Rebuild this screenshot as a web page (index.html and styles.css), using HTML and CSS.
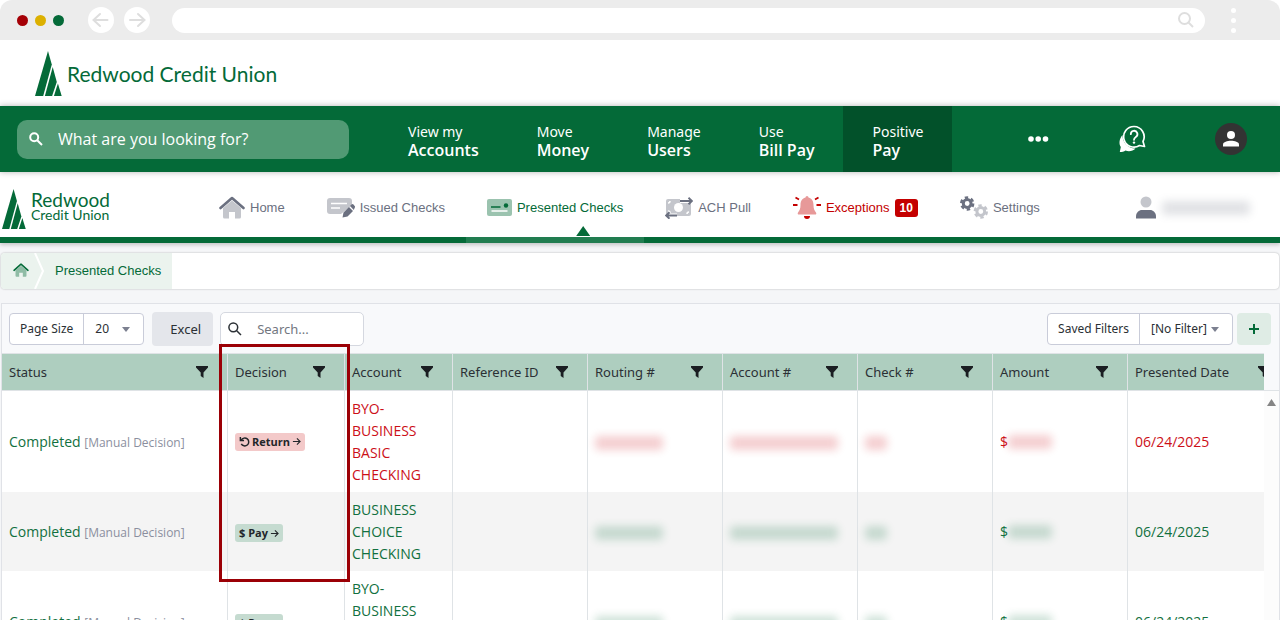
FILE: index.html
```html
<!DOCTYPE html>
<html lang="en">
<head>
    <meta charset="UTF-8">
    <meta name="viewport" content="width=device-width, initial-scale=1.0">
    <title>Redwood Credit Union - Presented Checks</title>
    <link rel="stylesheet" href="styles.css">
</head>
<body>
    <!-- Shared icons -->
    <svg class="symbols" aria-hidden="true">
        <symbol id="trees" viewBox="0 0 27 45">
            <path d="M13 0L16.800 13.500L8.200 45H0z"/>
            <path d="M17.700 16L21.800 31L17.100 45H9.900z"/>
            <path d="M22.900 32.500L26.700 45H18.900z"/>
        </symbol>
        <symbol id="funnel" viewBox="0 0 12 12">
            <path d="M0 0h12v1.500L7.500 6.500V12L4.700 10V6.500L0 1.500z"/>
        </symbol>
        <symbol id="arrow" viewBox="0 0 10 10">
            <path d="M1 5h8M5.500 1.500L9 5L5.500 8.500" fill="none" stroke="currentColor" stroke-width="1.200"/>
        </symbol>
        <symbol id="house" viewBox="0 0 26 23">
            <path d="M4 12L13 4.500L22 12V21a1.500 1.500 0 0 1-1.500 1.500H16V16h-6v6.500H5.500A1.500 1.500 0 0 1 4 21z" class="soft"/>
            <path d="M1.500 12L13 2L24.500 12" fill="none" stroke="currentColor" stroke-width="2.600" stroke-linecap="round" stroke-linejoin="round"/>
        </symbol>
    </svg>

    <div class="browser-bar">
        <span class="dot red"></span>
        <span class="dot yellow"></span>
        <span class="dot green"></span>
        <button class="round back" aria-label="Back">
            <svg width="26" height="26" viewBox="0 0 26 26"><path d="M19.500 13H6M12 7L5.500 13L12 19"/></svg>
        </button>
        <button class="round" aria-label="Forward">
            <svg width="26" height="26" viewBox="0 0 26 26"><path d="M6 13H19.500M14 7L20.500 13L14 19"/></svg>
        </button>
        <div class="address">
            <input type="text" aria-label="Address">
            <svg width="16" height="16" viewBox="0 0 16 16"><circle cx="6.500" cy="6.500" r="5.500"/><path d="M10.500 10.500L15 15"/></svg>
        </div>
        <button class="kebab" aria-label="Browser menu"><i></i><i></i><i></i></button>
    </div>

    <header class="brand">
        <svg width="27" height="45"><use href="#trees"/></svg>
        <span>Redwood Credit Union</span>
    </header>

    <nav class="main-nav">
        <div class="site-search">
            <svg width="14" height="14" viewBox="0 0 14 14"><circle cx="5.200" cy="5.200" r="4"/><path d="M8.200 8.200L13 13"/></svg>
            <input type="text" placeholder="What are you looking for?" aria-label="What are you looking for?">
        </div>
        <a href="#" class="main-link">View my<b>Accounts</b></a>
        <a href="#" class="main-link">Move<b>Money</b></a>
        <a href="#" class="main-link">Manage<b>Users</b></a>
        <a href="#" class="main-link">Use<b>Bill Pay</b></a>
        <a href="#" class="main-link active">Positive<b>Pay</b></a>
        <div class="nav-tools">
            <button aria-label="More">
                <svg width="22" height="8" viewBox="0 0 22 8"><circle cx="4" cy="4" r="2.800"/><circle cx="11.200" cy="4" r="2.800"/><circle cx="18.500" cy="4" r="2.800"/></svg>
            </button>
            <button aria-label="Help">
                <svg width="28" height="28" viewBox="0 0 28 28">
                    <path d="M4.500 10C1 14 .800 19 2.800 22L1.800 27C4 27 6 26.500 7.500 25.500C11 27 15 26 17.500 23.500C10 23.500 4.500 18 4.500 10z"/>
                    <path d="M16 1.500a10.300 10.300 0 1 0 5.500 19L26.500 21.500L25 16.500A10.300 10.300 0 0 0 16 1.500z" fill="none" stroke="#fff" stroke-width="1.700" stroke-linejoin="round"/>
                    <path d="M12.800 9.200a3.300 3.300 0 1 1 5 2.700c-1.200.800-1.800 1.300-1.800 2.900" fill="none" stroke="#fff" stroke-width="1.800" stroke-linecap="round"/>
                    <circle cx="16" cy="17.600" r="1.200"/>
                </svg>
            </button>
            <button class="avatar" aria-label="Profile">
                <svg width="16" height="16" viewBox="0 0 16 16"><circle cx="8" cy="4" r="4"/><path d="M0 15.500v-2C0 11 4.500 9.800 8 9.800s8 1.200 8 3.700v2z"/></svg>
            </button>
        </div>
    </nav>

    <nav class="sub-nav">
        <a href="#" class="sub-brand">
            <svg width="24" height="40"><use href="#trees"/></svg>
            <span><b>Redwood</b><i>Credit Union</i></span>
        </a>
        <a href="#" class="tab">
            <svg width="26" height="23"><use href="#house"/></svg>Home
        </a>
        <a href="#" class="tab">
            <svg width="28" height="22" viewBox="0 0 28 22">
                <path class="soft" d="M3 1h19a3 3 0 0 1 3 3v4L14 17H3a3 3 0 0 1-3-3V4a3 3 0 0 1 3-3z"/>
                <path d="M4 6.500h16M4 11h9" stroke="#fff" stroke-width="1.600"/>
                <path d="M15.500 20.500l1-5L22 10l4 4L20.500 19.500zM23 9l1.500-1.500q1-.800 2 0l1.200 1.500q.700 1 0 1.800L26.800 13z" fill="currentColor"/>
            </svg>Issued Checks
        </a>
        <a href="#" class="tab current">
            <svg width="25" height="17" viewBox="0 0 25 17">
                <rect class="soft" width="25" height="17" rx="2"/>
                <path d="M4 8h9.500" stroke="currentColor" stroke-width="1.500"/><circle cx="19" cy="6.500" r="2.200" fill="currentColor"/>
                <path d="M4.500 12h16" stroke="#fff" stroke-width="1.500"/>
            </svg>Presented Checks
        </a>
        <a href="#" class="tab">
            <svg width="28" height="22" viewBox="0 0 28 22">
                <rect class="soft" x="1" y="2" width="25" height="17" rx="2"/>
                <circle cx="13.500" cy="10.500" r="4.500" fill="#fff"/>
                <path d="M3 6a2 2 0 0 0 2-2M3 14a2 2 0 0 1 2 2M24 15a2 2 0 0 0-2 2" stroke="#fff" fill="none" stroke-width="1.500"/>
                <path d="M15 4h9M12 18.500H4" stroke="#fff" stroke-width="4" fill="none"/>
                <path d="M15 4h12M23.500 .800L27 4L23.500 7.200M12 18.500H1M4.500 15.300L1 18.500L4.500 21.700" stroke="currentColor" stroke-width="1.900" fill="none"/>
            </svg>ACH Pull
        </a>
        <a href="#" class="tab alert">
            <svg width="28" height="23" viewBox="0 0 28 23">
                <path class="soft" d="M14 0q1.500 0 1.500 1.500C19.500 2.500 20.500 6 20.500 9c0 4 1 5.500 2.500 7.500q1 2-1 2H6q-2 0-1-2C6.500 14.500 7.500 13 7.500 9c0-3 1-6.500 5-7.500Q12.500 0 14 0z"/>
                <path d="M11 20h6a3 3 0 0 1-6 0z" fill="currentColor"/>
                <path d="M2.500 1.500l3.500 2M0 9h4.500M25.500 1.500L22 3.500M23.500 9H28" stroke="currentColor" stroke-width="1.800"/>
            </svg>Exceptions<span class="badge">10</span>
        </a>
        <a href="#" class="tab">
            <svg width="28" height="23" viewBox="0 0 28 23">
                <g fill="none" stroke="currentColor"><circle cx="7.200" cy="7.500" r="3.900" stroke-width="3"/><circle cx="7.200" cy="7.500" r="6" stroke-width="2.400" stroke-dasharray="3.400 2.880"/></g>
                <g fill="none" class="soft-line"><circle cx="20.800" cy="15.500" r="3.900" stroke-width="3"/><circle cx="20.800" cy="15.500" r="6" stroke-width="2.400" stroke-dasharray="3.400 2.880"/></g>
            </svg>Settings
        </a>
        <a href="#" class="user" aria-label="Account owner">
            <svg width="20" height="23" viewBox="0 0 20 23"><circle class="soft" cx="10" cy="6" r="5.500"/><path d="M0 22.500v-2c0-4 3-6.500 6-6.500h8c3 0 6 2.500 6 6.500v2z" fill="currentColor"/></svg>
            <span class="redacted owner"></span>
        </a>
    </nav>

    <main>
        <div class="crumbs">
            <a href="#" class="crumb-home" aria-label="Home"><svg width="16" height="14" viewBox="0 0 26 23"><use href="#house"/></svg></a>
            <svg class="chevron" width="10" height="36" viewBox="0 0 10 36"><path d="M1 0L9 18L1 36"/></svg>
            <a href="#" class="crumb-page">Presented Checks</a>
        </div>

        <section class="panel">
            <div class="toolbar">
                <div class="group">
                    <label for="pageSize">Page Size</label>
                    <span class="pick"><select id="pageSize" class="size"><option>20</option><option>50</option></select></span>
                </div>
                <button class="excel">Excel</button>
                <div class="search">
                    <svg width="14" height="14" viewBox="0 0 14 14"><circle cx="5.300" cy="5.300" r="4.400"/><path d="M8.500 8.500L13 13"/></svg>
                    <input type="text" placeholder="Search..." aria-label="Search">
                </div>
                <div class="group filters">
                    <label for="savedFilter">Saved Filters</label>
                    <span class="pick"><select id="savedFilter" class="saved"><option>[No Filter]</option></select></span>
                </div>
                <button class="add" aria-label="Add filter"><svg width="12" height="12" viewBox="0 0 12 12"><path d="M6 1v10M1 6h10"/></svg></button>
            </div>

            <div class="grid">
                <div class="table-wrap">
                    <table>
                        <colgroup>
                            <col class="c-status"><col class="c-decision"><col class="c-account">
                            <col class="c-std"><col class="c-std"><col class="c-std"><col class="c-std"><col class="c-std"><col>
                        </colgroup>
                        <thead>
                            <tr>
                                <th><div>Status<svg><use href="#funnel"/></svg></div></th>
                                <th><div>Decision<svg><use href="#funnel"/></svg></div></th>
                                <th><div>Account<svg><use href="#funnel"/></svg></div></th>
                                <th><div>Reference ID<svg><use href="#funnel"/></svg></div></th>
                                <th><div>Routing #<svg><use href="#funnel"/></svg></div></th>
                                <th><div>Account #<svg><use href="#funnel"/></svg></div></th>
                                <th><div>Check #<svg><use href="#funnel"/></svg></div></th>
                                <th><div>Amount<svg><use href="#funnel"/></svg></div></th>
                                <th><div class="wide">Presented Date<svg><use href="#funnel"/></svg></div></th>
                            </tr>
                        </thead>
                        <tbody>
                            <tr class="returned">
                                <td><span class="done">Completed</span> <span class="note">[Manual Decision]</span></td>
                                <td><span class="tag"><svg viewBox="0 0 12 12"><path d="M2.500 4.500A4.300 4.300 0 1 1 2.500 8.500M1.500 1v4h4" fill="none" stroke="currentColor" stroke-width="1.600"/></svg>Return<svg class="go"><use href="#arrow"/></svg></span></td>
                                <td>BYO-BUSINESS BASIC CHECKING</td>
                                <td></td>
                                <td><span class="redacted routing"></span></td>
                                <td><span class="redacted number"></span></td>
                                <td><span class="redacted check"></span></td>
                                <td><span class="money">$<span class="redacted amount"></span></span></td>
                                <td>06/24/2025</td>
                            </tr>
                            <tr>
                                <td><span class="done">Completed</span> <span class="note">[Manual Decision]</span></td>
                                <td><span class="tag">$ Pay<svg class="go"><use href="#arrow"/></svg></span></td>
                                <td>BUSINESS CHOICE CHECKING</td>
                                <td></td>
                                <td><span class="redacted routing"></span></td>
                                <td><span class="redacted number"></span></td>
                                <td><span class="redacted check"></span></td>
                                <td><span class="money">$<span class="redacted amount"></span></span></td>
                                <td>06/24/2025</td>
                            </tr>
                            <tr>
                                <td><span class="done">Completed</span> <span class="note">[Manual Decision]</span></td>
                                <td><span class="tag">$ Pay<svg class="go"><use href="#arrow"/></svg></span></td>
                                <td>BYO-BUSINESS BASIC CHECKING</td>
                                <td></td>
                                <td><span class="redacted routing"></span></td>
                                <td><span class="redacted number"></span></td>
                                <td><span class="redacted check"></span></td>
                                <td><span class="money">$<span class="redacted amount"></span></span></td>
                                <td>06/24/2025</td>
                            </tr>
                        </tbody>
                    </table>
                </div>
                <div class="scrollbar"><span></span></div>
                <div class="highlight"></div>
            </div>
        </section>
    </main>
</body>
</html>
```

FILE: styles.css
```css
* {
    margin: 0;
    padding: 0;
    box-sizing: border-box;
}

body {
    font-family: 'Noto Sans', 'Open Sans', sans-serif;
    font-size: 13px;
    color: #2b3035;
    background: #fff;
    height: 100vh;
    overflow: hidden;
    display: flex;
    flex-direction: column;
}

a {
    color: inherit;
    text-decoration: none;
}

button, input, select {
    font: inherit;
    color: inherit;
    border: none;
    background: none;
    outline: none;
}

svg {
    display: block;
    flex: none;
}

.symbols {
    position: absolute;
    width: 0;
    height: 0;
}

/* Browser frame */
.browser-bar {
    flex: none;
    height: 40px;
    background: #ececec;
    border-radius: 12px 12px 0 0;
    display: flex;
    align-items: center;
    padding: 0 44px 0 17px;
}

.dot {
    width: 11px;
    height: 11px;
    border-radius: 50%;
    margin-right: 7px;
}

.red { background: #a50006; }
.yellow { background: #dcb000; }
.green { background: #046a38; }

.round {
    width: 26px;
    height: 26px;
    border-radius: 50%;
    background: #fff;
    margin-right: 10px;
}

.back {
    margin-left: 17px;
}

.round path {
    fill: none;
    stroke: #dedede;
    stroke-width: 2;
    stroke-linecap: round;
}

.address {
    flex: 1;
    height: 25px;
    border-radius: 13px;
    background: #fff;
    margin: 0 26px 0 12px;
    padding: 0 11px 0 16px;
    display: flex;
    align-items: center;
}

.address input {
    flex: 1;
}

.address svg {
    fill: none;
    stroke: #dedede;
    stroke-width: 2;
}

.kebab {
    display: flex;
    flex-direction: column;
    gap: 5px;
}

.kebab i {
    width: 5px;
    height: 5px;
    border-radius: 50%;
    background: #fff;
}

/* Brand */
.brand {
    flex: none;
    height: 66px;
    padding: 0 35px;
    display: flex;
    align-items: center;
    gap: 5px;
    font-family: Lato, sans-serif;
    font-size: 21px;
    color: #046a38;
}

.brand svg, .sub-brand svg {
    fill: #046a38;
}

/* Main navigation */
.main-nav {
    flex: none;
    height: 66px;
    background: #046a38;
    color: #fff;
    display: flex;
    align-items: center;
    padding: 0 33px 0 17px;
    box-shadow: 0 0 6px rgba(0, 0, 0, 0.3);
    position: relative;
    z-index: 2;
}

.site-search {
    flex: 0 1 332px;
    height: 39px;
    margin-right: 30px;
    padding: 0 12px;
    border-radius: 10px;
    background: #519a74;
    display: flex;
    align-items: center;
    gap: 15px;
}

.site-search svg {
    fill: none;
    stroke: #fff;
    stroke-width: 2;
}

.site-search input {
    flex: 1;
    min-width: 0;
    font-family: 'Open Sans', sans-serif;
    font-size: 16px;
}

.site-search input::placeholder {
    color: #fff;
    opacity: 1;
}

.main-link {
    height: 66px;
    padding: 16px 29px 0;
    font-size: 14px;
    line-height: 19px;
    white-space: nowrap;
}

.main-link b {
    display: block;
    font-family: 'Open Sans', sans-serif;
    font-size: 16px;
    font-weight: 600;
}

.main-link.active {
    background: #02512a;
}

.nav-tools {
    margin-left: auto;
    display: flex;
    align-items: center;
    gap: 69px;
}

.nav-tools svg {
    fill: #fff;
}

.avatar {
    width: 32px;
    height: 32px;
    border-radius: 50%;
    background: #333;
    display: grid;
    place-items: center;
}

/* Sub navigation */
.sub-nav {
    flex: none;
    height: 71px;
    border-bottom: 6px solid #046a38;
    display: flex;
    align-items: flex-start;
    padding: 0 30px 0 2px;
    font-family: 'Liberation Sans', Arial, sans-serif;
    color: #6b7080;
    box-shadow: 0 2px 4px rgba(0, 0, 0, 0.2);
    position: relative;
    z-index: 1;
}

.soft {
    fill: currentColor;
    opacity: 0.4;
}

.soft-line {
    stroke: currentColor;
    opacity: 0.4;
}

.sub-brand {
    width: 196px;
    padding-top: 17px;
    display: flex;
    align-items: center;
    gap: 5px;
    font-family: Lato, sans-serif;
    color: #046a38;
}

.sub-brand b, .sub-brand i {
    display: block;
    font-weight: 400;
    font-style: normal;
    white-space: nowrap;
}

.sub-brand b {
    font-size: 19px;
    line-height: 16px;
}

.sub-brand i {
    font-size: 14px;
    line-height: 14px;
    padding-bottom: 4px;
}

.tab {
    height: 71px;
    padding: 0 21px;
    display: flex;
    align-items: center;
    gap: 5px;
    white-space: nowrap;
    position: relative;
}

.current {
    color: #046a38;
    border-bottom: 6px solid #217d50;
    padding-top: 6px;
}

.current::after {
    content: '';
    position: absolute;
    right: 54px;
    bottom: 1px;
    width: 14px;
    height: 10px;
    background: #046a38;
    clip-path: polygon(50% 0, 100% 100%, 0 100%);
}

.alert {
    color: #c40000;
}

.badge {
    background: #c40000;
    color: #fff;
    font-size: 12px;
    font-weight: 700;
    line-height: 18px;
    padding: 0 5px;
    border-radius: 3px;
}

.user {
    height: 71px;
    margin-left: auto;
    display: flex;
    align-items: center;
    gap: 6px;
}

/* Blurred-out values */
.redacted {
    display: inline-block;
    vertical-align: middle;
    height: 14px;
    border-radius: 4px;
    background: currentColor;
    opacity: 0.2;
    filter: blur(4px);
}

.owner { width: 88px; }
.routing { width: 68px; }
.number { width: 108px; }
.check { width: 22px; }
.amount { width: 44px; }

/* Page body */
main {
    flex: 1;
    min-height: 0;
    background: #f5f6f8;
    padding-top: 10px;
    display: flex;
    flex-direction: column;
}

.crumbs {
    flex: none;
    height: 36px;
    display: flex;
    background: #fff;
    border-radius: 4px;
    box-shadow: 0 0 2px rgba(0, 0, 0, 0.3);
    margin: 0 1px;
    font-family: 'Liberation Sans', Arial, sans-serif;
    color: #046a38;
    overflow: hidden;
}

.crumb-home, .crumb-page, .chevron {
    background: #ebf3ee;
}

.crumb-home {
    padding: 10px 5px 0 12px;
}

.chevron path {
    fill: none;
    stroke: #fff;
    stroke-width: 2;
}

.crumb-page {
    padding: 0 11px;
    line-height: 35px;
}

.panel {
    flex: 1;
    min-height: 0;
    margin: 14px 0 0 1px;
    border: 1px solid #e0e2e7;
    border-bottom: none;
    background: #f8f9fb;
    display: flex;
    flex-direction: column;
}

.toolbar {
    flex: none;
    height: 49px;
    padding: 0 8px 0 7px;
    display: flex;
    align-items: center;
    font-size: 12px;
}

.group {
    display: flex;
    height: 32px;
    border: 1px solid #c9ccd9;
    border-radius: 4px;
    background: #fff;
    margin-right: 8px;
}

.group label {
    padding: 0 10px;
    line-height: 30px;
    border-right: 1px solid #c9ccd9;
}

.pick {
    display: flex;
    position: relative;
}

.pick select {
    appearance: none;
    padding: 0 11px;
}

.pick::after {
    content: '';
    position: absolute;
    right: 13px;
    top: 13px;
    border: 4px solid transparent;
    border-top: 5px solid #7c8090;
    pointer-events: none;
}

.size { width: 59px; }
.saved { width: 92px; }

.excel {
    height: 34px;
    padding: 0 12px 0 18px;
    border-radius: 4px;
    background: #e4e6eb;
    font-size: 13px;
    margin-right: 7px;
}

.search {
    width: 144px;
    height: 34px;
    border: 1px solid #d5d8e0;
    border-radius: 5px;
    background: #fff;
    display: flex;
    align-items: center;
    gap: 15px;
    padding: 0 7px;
}

.search svg {
    fill: none;
    stroke: #2b3035;
    stroke-width: 1.5;
}

.search input {
    flex: 1;
    min-width: 0;
    font-size: 13px;
}

.search input::placeholder {
    color: #73777f;
    opacity: 1;
}

.filters {
    margin-left: auto;
    margin-right: 4px;
}

.add {
    width: 34px;
    height: 32px;
    border-radius: 4px;
    background: #dfece5;
    display: grid;
    place-items: center;
}

.add path {
    stroke: #046a38;
    stroke-width: 2;
}

/* Checks table */
.grid {
    flex: 1;
    min-height: 0;
    display: flex;
    position: relative;
}

.table-wrap {
    flex: 1;
    min-width: 0;
    overflow: hidden;
    background: #fff;
}

table {
    width: 100%;
    table-layout: fixed;
    border-collapse: separate;
    border-spacing: 0;
}

.c-status { width: 226px; }
.c-decision { width: 117px; }
.c-account { width: 108px; }
.c-std { width: 135px; }

th {
    height: 38px;
    background: #aecebf;
    border: solid #dfe3e6;
    border-width: 1px 1px 1px 0;
    padding: 0;
    font-weight: 400;
    text-align: left;
    overflow: hidden;
}

th div {
    display: flex;
    align-items: center;
    justify-content: space-between;
    padding: 0 19px 0 7px;
    white-space: nowrap;
}

th .wide {
    width: 161px;
}

th svg {
    width: 12px;
    height: 12px;
    fill: #1b1e22;
}

td {
    padding: 7px 28px 6px 7px;
    font-family: 'Open Sans', sans-serif;
    font-size: 14px;
    line-height: 22px;
    color: #117040;
    border-right: 1px solid #dfe3e6;
}

td:nth-child(n+4), td:first-child, td:nth-child(2) {
    padding-right: 0;
    white-space: nowrap;
}

th:last-child, td:last-child {
    border-right: none;
}

tr:nth-child(even) td {
    background: #f4f4f4;
}

.returned td {
    color: #cc0f18;
}

td .done {
    color: #117040;
}

td .note {
    color: #8b8f9e;
    font-size: 12px;
}

.money {
    display: flex;
    align-items: center;
}

.tag {
    display: inline-flex;
    align-items: center;
    gap: 2px;
    height: 18px;
    padding: 0 4px;
    border-radius: 3px;
    background: #c5dbd0;
    color: #22262a;
    font-size: 11px;
    font-weight: 700;
}

.returned .tag {
    background: #f3c9c9;
}

.tag svg {
    width: 11px;
    height: 11px;
}

.tag .go {
    width: 9px;
    height: 9px;
}

.scrollbar {
    width: 15px;
    margin-top: 37px;
    border-top: 1px solid #dfe3e6;
    background: #fcfcfc;
}

.scrollbar span {
    display: block;
    width: 9px;
    height: 7px;
    margin: 8px 0 0 3px;
    background: #858585;
    clip-path: polygon(50% 0, 100% 100%, 0 100%);
}

/* Callout around the Decision column */
.highlight {
    position: absolute;
    left: 217px;
    top: -9px;
    width: 131px;
    height: 238px;
    border: 3px solid #9b0006;
    pointer-events: none;
}
```
